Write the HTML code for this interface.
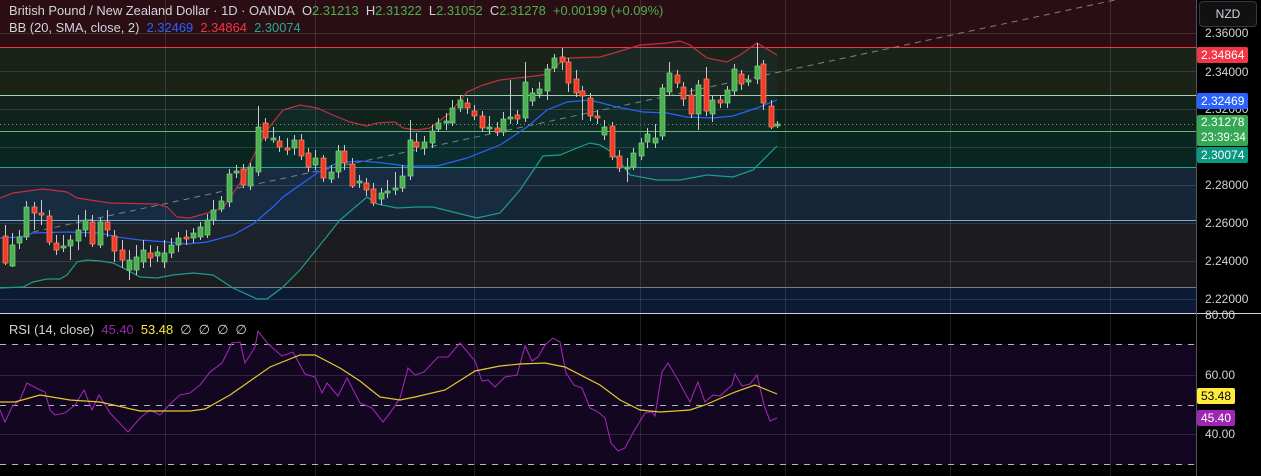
<!DOCTYPE html>
<html><head><meta charset="utf-8"><style>
html,body{margin:0;padding:0;background:#000;}
body{width:1261px;height:476px;overflow:hidden;position:relative;font-family:"Liberation Sans",sans-serif;}
svg{position:absolute;left:0;top:0;}
.lg{position:absolute;left:9px;font-size:12.9px;color:#d1d4dc;white-space:nowrap;}
.ax{position:absolute;left:1205px;font-size:12px;color:#d1d4dc;}
.bx{position:absolute;left:1197px;font-size:12px;padding:0 4px;border-radius:2px;line-height:16px;}
</style></head><body>
<svg id="s" width="1261" height="476" xmlns="http://www.w3.org/2000/svg">
<rect x="0" y="0" width="1196" height="47" fill="#2b0e13"/>
<rect x="0" y="47" width="1196" height="48" fill="#1b2319"/>
<rect x="0" y="95" width="1196" height="36" fill="#10221b"/>
<rect x="0" y="131" width="1196" height="36" fill="#0a2620"/>
<rect x="0" y="167" width="1196" height="53" fill="#172637"/>
<rect x="0" y="220" width="1196" height="67" fill="#1c1c1e"/>
<rect x="0" y="287" width="1196" height="26" fill="#0d1a35"/>
<rect x="0" y="344" width="1196" height="121" fill="#120620"/>
<g stroke="rgba(255,255,255,0.12)" stroke-width="1">
<line x1="0" y1="33.5" x2="1196" y2="33.5"/><line x1="0" y1="71.5" x2="1196" y2="71.5"/><line x1="0" y1="109.5" x2="1196" y2="109.5"/><line x1="0" y1="147.5" x2="1196" y2="147.5"/><line x1="0" y1="185.5" x2="1196" y2="185.5"/><line x1="0" y1="223.5" x2="1196" y2="223.5"/><line x1="0" y1="261.5" x2="1196" y2="261.5"/><line x1="0" y1="299.5" x2="1196" y2="299.5"/>
<line x1="0" y1="375.5" x2="1196" y2="375.5"/><line x1="0" y1="434.5" x2="1196" y2="434.5"/>
<line x1="165.5" y1="0" x2="165.5" y2="476"/><line x1="315.5" y1="0" x2="315.5" y2="476"/><line x1="474.5" y1="0" x2="474.5" y2="476"/><line x1="640.5" y1="0" x2="640.5" y2="476"/><line x1="785.5" y1="0" x2="785.5" y2="476"/><line x1="950.5" y1="0" x2="950.5" y2="476"/><line x1="1110.5" y1="0" x2="1110.5" y2="476"/>
</g>
<line x1="0" y1="47.5" x2="1196" y2="47.5" stroke="#f23645"/>
<line x1="0" y1="95.5" x2="1196" y2="95.5" stroke="#a5d6a7"/>
<line x1="0" y1="131.5" x2="1196" y2="131.5" stroke="#66bb6a"/>
<line x1="0" y1="167.5" x2="1196" y2="167.5" stroke="#26a69a"/>
<line x1="0" y1="220.5" x2="1196" y2="220.5" stroke="#64b5f6"/>
<line x1="0" y1="287.5" x2="1196" y2="287.5" stroke="#787b86"/>
<g stroke="#b2b5be" stroke-dasharray="6,6" stroke-width="1">
<line x1="0" y1="344.5" x2="1196" y2="344.5"/><line x1="0" y1="405.5" x2="1196" y2="405.5"/><line x1="0" y1="464.5" x2="1196" y2="464.5"/>
</g>
<line x1="0" y1="124.5" x2="1196" y2="124.5" stroke="#4caf50" stroke-dasharray="1,3"/>
<line x1="33" y1="232" x2="1115" y2="0" stroke="#9598a1" stroke-dasharray="6,5" stroke-opacity="0.8"/>
<g id="bb" fill="none" stroke-width="1.2"></g>
<g id="cd"></g>
<g id="rsi" fill="none"></g>
<line x1="0" y1="313.5" x2="1261" y2="313.5" stroke="#d1d4dc"/>
<line x1="1196.5" y1="0" x2="1196.5" y2="476" stroke="#50535e"/>
</svg>
<div class="lg" style="top:3px">British Pound / New Zealand Dollar · 1D · OANDA&nbsp; O<span style="color:#4caf50">2.31213</span>&nbsp; H<span style="color:#4caf50">2.31322</span>&nbsp; L<span style="color:#4caf50">2.31052</span>&nbsp; C<span style="color:#4caf50">2.31278</span>&nbsp; <span style="color:#4caf50">+0.00199 (+0.09%)</span></div>
<div class="lg" style="top:20px">BB (20, SMA, close, 2)&nbsp; <span style="color:#2962ff">2.32469</span>&nbsp; <span style="color:#f23645">2.34864</span>&nbsp; <span style="color:#22ab94">2.30074</span></div>
<div class="lg" style="top:322px">RSI (14, close)&nbsp; <span style="color:#9c27b0">45.40</span>&nbsp; <span style="color:#ffeb3b">53.48</span>&nbsp; ∅&nbsp; ∅&nbsp; ∅&nbsp; ∅</div>
<div style="position:absolute;left:1199px;top:1px;width:56px;height:24px;border:1px solid #363a45;border-radius:4px;background:#111;color:#d1d4dc;font-size:12px;line-height:24px;text-align:center;">NZD</div>
<div class="ax" style="top:26px">2.36000</div>
<div class="ax" style="top:65px">2.34000</div>
<div class="ax" style="top:102px">2.32000</div>
<div class="ax" style="top:178px">2.28000</div>
<div class="ax" style="top:216px">2.26000</div>
<div class="ax" style="top:254px">2.24000</div>
<div class="ax" style="top:292px">2.22000</div>
<div class="ax" style="top:308px">80.00</div>
<div class="ax" style="top:368px">60.00</div>
<div class="ax" style="top:427px">40.00</div>
<div class="bx" style="top:47px;background:#f23645;color:#fff">2.34864</div>
<div class="bx" style="top:93px;background:#2962ff;color:#fff">2.32469</div>
<div class="bx" style="top:115px;background:#34a853;color:#fff;line-height:15px;padding-right:2px;">2.31278<br><span style="font-size:11.5px">23:39:34</span></div>
<div class="bx" style="top:147px;background:#089981;color:#fff">2.30074</div>
<div class="bx" style="top:388px;background:#ffeb3b;color:#000">53.48</div>
<div class="bx" style="top:410px;background:#9c27b0;color:#fff">45.40</div>
<script>
var NS="http://www.w3.org/2000/svg";
function pl(g,pts,col,w){var p=document.createElementNS(NS,"polyline");p.setAttribute("points",pts.map(function(a){return a.join(",")}).join(" "));p.setAttribute("stroke",col);p.setAttribute("stroke-width",w);p.setAttribute("fill","none");g.appendChild(p);}
var bb=document.getElementById("bb");
var up=[[0,198],[13,193],[43,189],[67,192],[77,198],[110,203],[157,204],[167,207],[177,217],[190,218],[207,213],[223,208],[240,183],[250,163],[267,130],[283,110],[300,105],[317,108],[333,115],[350,122],[367,126],[377,123],[395,122],[403,128],[417,130],[430,128],[450,113],[467,92],[483,85],[500,80],[543,75],[567,58],[600,57],[617,52],[640,45],[667,43],[680,41],[690,45],[707,58],[727,62],[740,55],[757,43],[777,55]];
var mid=[[0,238],[20,237],[33,233],[67,232],[100,233],[117,237],[140,240],[167,242],[187,244],[207,242],[233,235],[253,224],[273,207],[283,197],[300,185],[317,173],[337,163],[360,161],[383,163],[407,166],[437,166],[467,158],[500,145],[527,127],[547,110],[567,102],[590,100],[617,107],[643,112],[667,113],[687,117],[713,118],[733,116],[757,108],[777,100]];
var lo=[[0,288],[23,287],[33,282],[47,279],[60,279],[67,275],[77,262],[87,260],[100,261],[113,263],[127,270],[140,277],[157,278],[173,275],[193,273],[213,275],[233,288],[257,299],[267,299],[283,287],[300,270],[320,245],[340,220],[367,197],[377,204],[397,208],[417,207],[433,207],[457,213],[477,218],[500,213],[520,190],[543,156],[560,155],[577,148],[590,143],[600,145],[613,153],[630,175],[657,180],[680,180],[707,175],[733,177],[753,170],[777,146]];
var f=document.createElementNS(NS,"polygon");f.setAttribute("points",up.concat(lo.slice().reverse()).map(function(a){return a.join(",")}).join(" "));f.setAttribute("fill","rgba(33,150,243,0.06)");bb.appendChild(f);
pl(bb,up,"#c2303d",1.2);pl(bb,mid,"#2962ff",1.2);pl(bb,lo,"#1b9e8a",1.2);
var C=[[5,236,263,0,225,265],[12,245,266,1,233,267],[19,237,243,1,230,249],[26,207,237,1,201,240],[34,207,213,0,202,230],[41,213,215,0,200,225],[49,216,242,0,210,245],[56,243,250,0,235,255],[63,246,247,1,235,252],[70,240,246,1,235,260],[78,230,241,1,215,250],[85,220,230,1,210,237],[92,222,244,0,215,247],[100,222,245,1,218,248],[107,222,230,0,210,237],[114,236,251,0,230,262],[122,250,260,0,240,268],[129,260,270,1,250,280],[136,257,270,1,245,275],[143,250,262,1,240,268],[150,253,258,0,245,267],[157,252,256,1,246,262],[164,253,262,1,240,268],[171,245,253,1,238,258],[178,238,245,1,232,252],[186,237,238,0,230,245],[193,233,238,1,228,243],[200,227,237,1,222,240],[207,220,235,1,214,238],[213,210,220,1,200,225],[221,201,209,1,196,212],[229,174,202,1,169,207],[236,171,172,1,165,178],[243,169,185,0,164,188],[250,167,186,1,163,190],[258,127,172,1,106,176],[265,123,138,0,118,141],[273,138,139,1,127,143],[279,141,147,0,136,152],[287,148,149,0,138,155],[294,140,148,1,135,155],[301,140,156,0,134,160],[308,153,167,0,148,172],[315,158,165,1,150,170],[323,158,178,0,155,182],[331,172,179,1,165,183],[338,151,172,1,145,178],[344,151,163,0,145,170],[352,164,186,0,158,188],[359,181,182,1,175,188],[366,183,190,0,178,196],[373,189,203,0,183,206],[381,193,199,1,188,205],[387,191,192,1,180,198],[395,188,189,1,172,195],[402,176,188,1,165,192],[410,140,176,1,120,180],[416,142,147,0,133,152],[424,142,148,1,136,155],[432,131,143,1,125,148],[438,123,129,1,118,132],[446,121,123,1,113,130],[452,108,123,1,100,126],[460,100,108,1,96,112],[467,103,108,0,98,114],[474,111,116,0,105,120],[482,116,128,0,111,132],[489,127,128,1,116,134],[497,128,132,0,122,136],[503,119,132,1,112,136],[510,117,118,1,80,124],[517,115,119,0,110,124],[525,82,118,1,62,122],[532,93,101,1,88,106],[539,89,94,1,82,98],[547,69,91,1,64,100],[554,58,68,1,54,72],[562,57,62,0,48,70],[568,62,83,0,58,92],[576,79,93,0,70,97],[582,91,96,0,86,120],[590,98,116,0,93,121],[597,116,118,0,110,124],[604,127,135,1,120,140],[612,126,157,0,122,160],[619,156,168,0,150,172],[627,167,168,1,158,182],[633,153,167,1,148,170],[641,143,156,1,138,160],[647,134,142,1,128,148],[655,138,143,1,124,148],[662,88,136,1,84,140],[669,73,92,1,62,96],[677,75,83,0,70,88],[683,87,99,0,82,106],[691,95,114,0,88,118],[698,85,114,1,80,130],[706,79,111,0,67,116],[712,100,114,1,96,122],[720,100,103,0,95,108],[727,90,103,1,86,108],[734,69,91,1,64,96],[741,74,84,0,70,90],[748,80,81,1,75,86],[757,66,79,1,43,84],[763,64,103,0,60,110],[771,106,127,0,100,129],[777,124,125,1,121,128]];
var cd=document.getElementById("cd"),h="";
C.forEach(function(c){var x=c[0],col=c[3]?"#4caf50":"#f23b2f",bd=c[3]?"#7bd77f":"#ff8a50";
h+='<line x1="'+(x+0.5)+'" y1="'+c[4]+'" x2="'+(x+0.5)+'" y2="'+c[5]+'" stroke="#c8cad0" stroke-width="1"/>';
var t=c[1],hh=Math.max(2,c[2]-c[1]);h+='<rect x="'+(x-2)+'" y="'+t+'" width="5" height="'+hh+'" fill="'+col+'" stroke="'+bd+'" stroke-width="0.7"/>';});
cd.innerHTML=h;
var rs=document.getElementById("rsi");
var pr=[[0,410],[5,422],[12,407],[20,400],[27,383],[40,390],[45,392],[50,410],[55,415],[65,413],[75,405],[84,390],[92,410],[99,395],[110,413],[128,432],[140,418],[150,410],[160,415],[170,404],[180,395],[190,393],[200,385],[210,372],[222,363],[232,343],[240,342],[245,363],[255,347],[258,331],[268,344],[282,356],[293,352],[305,374],[315,377],[322,393],[327,383],[338,396],[347,378],[360,403],[372,408],[383,422],[390,413],[400,398],[408,368],[415,375],[424,372],[438,357],[448,357],[460,343],[475,361],[482,381],[488,380],[495,387],[505,377],[517,375],[525,346],[532,361],[538,357],[545,345],[553,338],[560,342],[566,373],[574,385],[582,388],[590,408],[598,412],[605,418],[611,443],[618,451],[625,448],[634,431],[645,413],[652,412],[655,416],[662,372],[668,363],[678,380],[690,402],[698,382],[705,402],[713,395],[720,396],[732,385],[735,374],[742,386],[750,384],[757,375],[764,405],[770,421],[777,418]];
var yr=[[0,402],[15,402],[40,395],[70,400],[100,402],[140,411],[190,411],[205,409],[230,395],[270,367],[300,355],[315,355],[340,368],[360,381],[380,397],[400,400],[415,397],[445,390],[475,371],[500,366],[520,364],[545,363],[565,367],[600,385],[620,400],[640,410],[660,412],[690,410],[705,405],[735,392],[755,385],[777,394]];
pl(rs,pr,"#9c27b0",1.1);pl(rs,yr,"#e6c830",1.2);
</script>
</body></html>
